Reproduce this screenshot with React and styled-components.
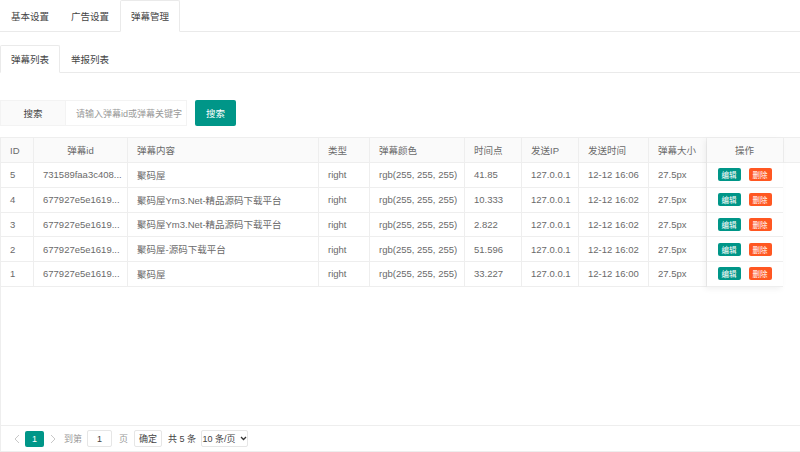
import React from "react";
import styled, { createGlobalStyle } from "styled-components";

const Global = createGlobalStyle`
  html, body { margin: 0; padding: 0; background: #fff; }
  body {
    font-family: "Liberation Sans", "Noto Sans CJK SC", sans-serif;
    font-size: 9.5px;
    color: #666;
  }
  * { box-sizing: border-box; }
`;

const Page = styled.div`
  width: 800px;
  height: 452px;
  overflow: hidden;
  display: flex;
  flex-direction: column;
`;

const TabBar = styled.div`
  display: flex;
  height: ${(p) => p.h}px;
  border-bottom: 1px solid #eaeaea;
  margin-top: ${(p) => p.mt || 0}px;
`;

const Tab = styled.div`
  width: 60px;
  display: flex;
  align-items: center;
  justify-content: center;
  color: #444;
  font-size: 9.5px;
  background: #fff;
  ${(p) =>
    p.active
      ? `border: 1px solid #eaeaea; border-bottom: 1px solid #fff; margin-bottom: -1px; border-radius: 2px 2px 0 0;`
      : `border: 1px solid transparent;`}
`;

const SearchRow = styled.div`
  display: flex;
  align-items: center;
  margin-top: 27px;
  height: 26px;
`;

const Label = styled.div`
  width: 65px;
  height: 26px;
  display: flex;
  align-items: center;
  justify-content: center;
  background: #fafafa;
  border: 1px solid #f3f3f3;
  border-right: none;
  color: #444;
`;

const Input = styled.div`
  width: 122px;
  height: 26px;
  display: flex;
  align-items: center;
  padding-left: 10px;
  border: 1px solid #f3f3f3;
  color: #999;
  font-size: 9px;
  white-space: nowrap;
`;

const GreenBtn = styled.div`
  margin-left: 8px;
  width: 41px;
  height: 26px;
  background: #009688;
  color: #fff;
  border-radius: 2px;
  display: flex;
  align-items: center;
  justify-content: center;
`;

const TableView = styled.div`
  margin-top: 11px;
  border: 1px solid #eee;
  border-right: none;
  flex: 1;
  display: flex;
  flex-direction: column;
`;

const TableBody = styled.div`
  flex: 1;
  display: flex;
  align-items: flex-start;
`;

const MainTable = styled.div`
  display: flex;
  flex-direction: column;
`;

const FixedTable = styled.div`
  display: flex;
  flex-direction: column;
  box-shadow: -2px 2px 6px rgba(0, 0, 0, 0.06);
  position: relative;
  background: #fff;
`;

const Row = styled.div`
  display: flex;
  height: ${(p) => (p.head ? 25 : 24.75)}px;
  background: ${(p) => (p.head ? "#fafafa" : "#fff")};
  border-bottom: 1px solid #eee;
`;

const Cell = styled.div`
  width: ${(p) => p.w}px;
  flex: none;
  display: flex;
  align-items: center;
  justify-content: ${(p) => (p.center ? "center" : "flex-start")};
  padding: 0 ${(p) => (p.center ? 0 : 9)}px;
  border-right: 1px solid ${(p) => (p.last ? "transparent" : "#eee")};
  color: #6a6a6a;
  white-space: nowrap;
  overflow: hidden;
  gap: 8px;
`;

const Gutter = styled.div`
  width: 18px;
  height: 25px;
  background: #fafafa;
  border-bottom: 1px solid #eee;
  border-left: 1px solid #eee;
`;

const SmallBtn = styled.span`
  display: inline-flex;
  align-items: center;
  justify-content: center;
  width: 23px;
  height: 13px;
  border-radius: 2px;
  font-size: 7.5px;
  color: #fff;
  background: ${(p) => (p.danger ? "#ff5722" : "#009688")};
`;

const PageBar = styled.div`
  height: 26px;
  border-top: 1px solid #eee;
  display: flex;
  align-items: center;
  padding-left: 7px;
  color: #333;
  font-size: 9px;
`;

const Arrow = styled.span`
  width: 17px;
  height: 16px;
  display: flex;
  align-items: center;
  justify-content: center;
`;

const Current = styled.span`
  width: 19px;
  height: 16px;
  background: #009688;
  color: #fff;
  display: flex;
  align-items: center;
  justify-content: center;
  border-radius: 2px;
`;

const Muted = styled.span`
  color: ${(p) => (p.dark ? "#444" : "#999")};
  margin: 0 ${(p) => p.mx || 5}px;
`;

const PBox = styled.span`
  height: 17px;
  width: ${(p) => p.w}px;
  border: 1px solid #e6e6e6;
  border-radius: 2px;
  display: flex;
  align-items: center;
  justify-content: center;
  gap: 4px;
  margin: 0 ${(p) => p.mx || 0}px;
  background: #fff;
  color: #444;
`;

const Chevron = ({ dir }) => (
  <svg width="6" height="10" viewBox="0 0 6 10">
    <path
      d={dir === "left" ? "M5 1L1 5l4 4" : "M1 1l4 4-4 4"}
      stroke="#c8c8c8"
      strokeWidth="1"
      fill="none"
    />
  </svg>
);

const cols = [
  { k: "id", t: "ID", w: 33 },
  { k: "did", t: "弹幕id", w: 94, hc: true },
  { k: "text", t: "弹幕内容", w: 191 },
  { k: "type", t: "类型", w: 51 },
  { k: "color", t: "弹幕颜色", w: 95 },
  { k: "time", t: "时间点", w: 57 },
  { k: "ip", t: "发送IP", w: 57 },
  { k: "date", t: "发送时间", w: 70 },
  { k: "size", t: "弹幕大小", w: 58 },
];

const rows = [
  { id: 5, did: "731589faa3c408...", text: "聚码屋", time: "41.85", date: "12-12 16:06" },
  { id: 4, did: "677927e5e1619...", text: "聚码屋Ym3.Net-精品源码下载平台", time: "10.333", date: "12-12 16:02" },
  { id: 3, did: "677927e5e1619...", text: "聚码屋Ym3.Net-精品源码下载平台", time: "2.822", date: "12-12 16:02" },
  { id: 2, did: "677927e5e1619...", text: "聚码屋-源码下载平台", time: "51.596", date: "12-12 16:02" },
  { id: 1, did: "677927e5e1619...", text: "聚码屋", time: "33.227", date: "12-12 16:00" },
].map((r) => ({ ...r, type: "right", color: "rgb(255, 255, 255)", ip: "127.0.0.1", size: "27.5px" }));

export default function App() {
  return (
    <Page>
      <Global />
      <TabBar h={32}>
        <Tab>基本设置</Tab>
        <Tab>广告设置</Tab>
        <Tab active>弹幕管理</Tab>
      </TabBar>
      <TabBar h={28} mt={13}>
        <Tab active>弹幕列表</Tab>
        <Tab>举报列表</Tab>
      </TabBar>
      <SearchRow>
        <Label>搜索</Label>
        <Input>请输入弹幕id或弹幕关键字</Input>
        <GreenBtn>搜索</GreenBtn>
      </SearchRow>
      <TableView>
        <TableBody>
          <MainTable>
            <Row head>
              {cols.map((c) => (
                <Cell key={c.k} w={c.w} center={c.hc}>
                  {c.t}
                </Cell>
              ))}
            </Row>
            {rows.map((r) => (
              <Row key={r.id}>
                {cols.map((c) => (
                  <Cell key={c.k} w={c.w}>
                    {r[c.k]}
                  </Cell>
                ))}
              </Row>
            ))}
          </MainTable>
          <FixedTable>
            <Row head>
              <Cell w={76} center last>
                操作
              </Cell>
            </Row>
            {rows.map((r) => (
              <Row key={r.id}>
                <Cell w={76} center last>
                  <SmallBtn>编辑</SmallBtn>
                  <SmallBtn danger>删除</SmallBtn>
                </Cell>
              </Row>
            ))}
          </FixedTable>
          <Gutter />
        </TableBody>
        <PageBar>
          <Arrow>
            <Chevron dir="left" />
          </Arrow>
          <Current>1</Current>
          <Arrow>
            <Chevron dir="right" />
          </Arrow>
          <Muted mx={3}>到第</Muted>
          <PBox w={25} mx={2}>1</PBox>
          <Muted mx={5}>页</Muted>
          <PBox w={28} mx={1}>确定</PBox>
          <Muted mx={5} dark>共 5 条</Muted>
          <PBox w={47}>
            10 条/页
            <svg width="7" height="5" viewBox="0 0 7 5">
              <path d="M1 1l2.5 2.5L6 1" stroke="#333" strokeWidth="1.3" fill="none" />
            </svg>
          </PBox>
        </PageBar>
      </TableView>
    </Page>
  );
}
